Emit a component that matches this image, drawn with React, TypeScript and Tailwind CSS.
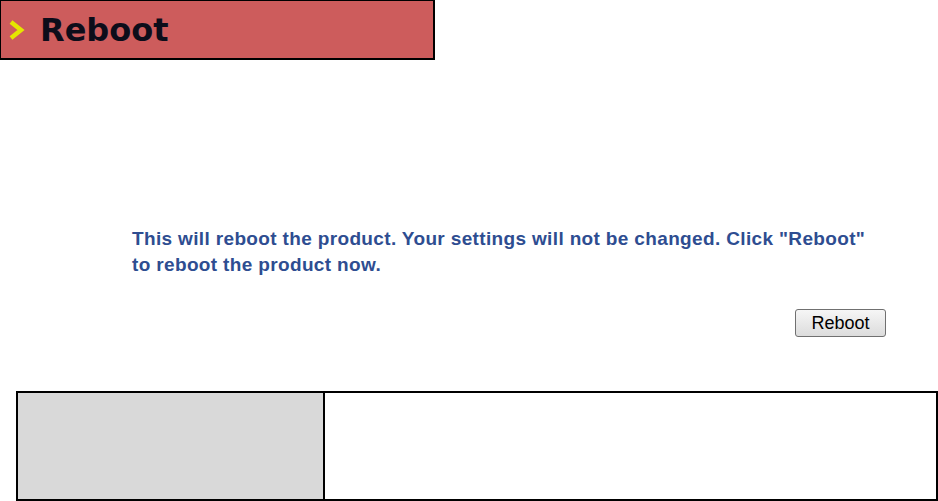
import React from "react";

export default function App() {
  return (
    <div className="w-[938px] h-[501px] bg-white flex flex-col overflow-hidden" style={{ fontFamily: '"Liberation Sans", Arial, sans-serif' }}>
      <div className="w-[435px] h-[60px] bg-[#cd5c5c] border border-black border-b-2 border-r-2 flex items-center pl-[7px] shrink-0">
        <svg width="17" height="22" viewBox="0 0 17 22" className="mt-[1px]">
          <polyline points="3,3 13,11 3,19" fill="none" stroke="#e6e600" strokeWidth="4.5" strokeLinejoin="miter" />
        </svg>
        <span className="ml-[15px] text-[32px] font-bold text-[#0d0d1a] leading-none" style={{ fontFamily: '"DejaVu Sans", Verdana, sans-serif' }}>
          Reboot
        </span>
      </div>
      <div className="pl-[132px] pt-[166px] pr-[20px]">
        <p className="text-[19px] leading-[26px] font-bold text-[#2e4d91] tracking-[0.35px] whitespace-nowrap">
          This will reboot the product. Your settings will not be changed. Click "Reboot"
          <br />
          to reboot the product now.
        </p>
      </div>
      <div className="flex justify-end pr-[52px] mt-[31px]">
        <button className="w-[91px] h-[28px] rounded-[3px] border border-[#707070] bg-gradient-to-b from-[#f6f6f6] to-[#dcdcdc] text-[18px] text-black leading-none">
          Reboot
        </button>
      </div>
      <div className="mt-auto ml-[16px] h-[110px] flex border-2 border-black">
        <div className="w-[307px] bg-[#d9d9d9] border-r-2 border-black" />
        <div className="flex-1 bg-white" />
      </div>
    </div>
  );
}
